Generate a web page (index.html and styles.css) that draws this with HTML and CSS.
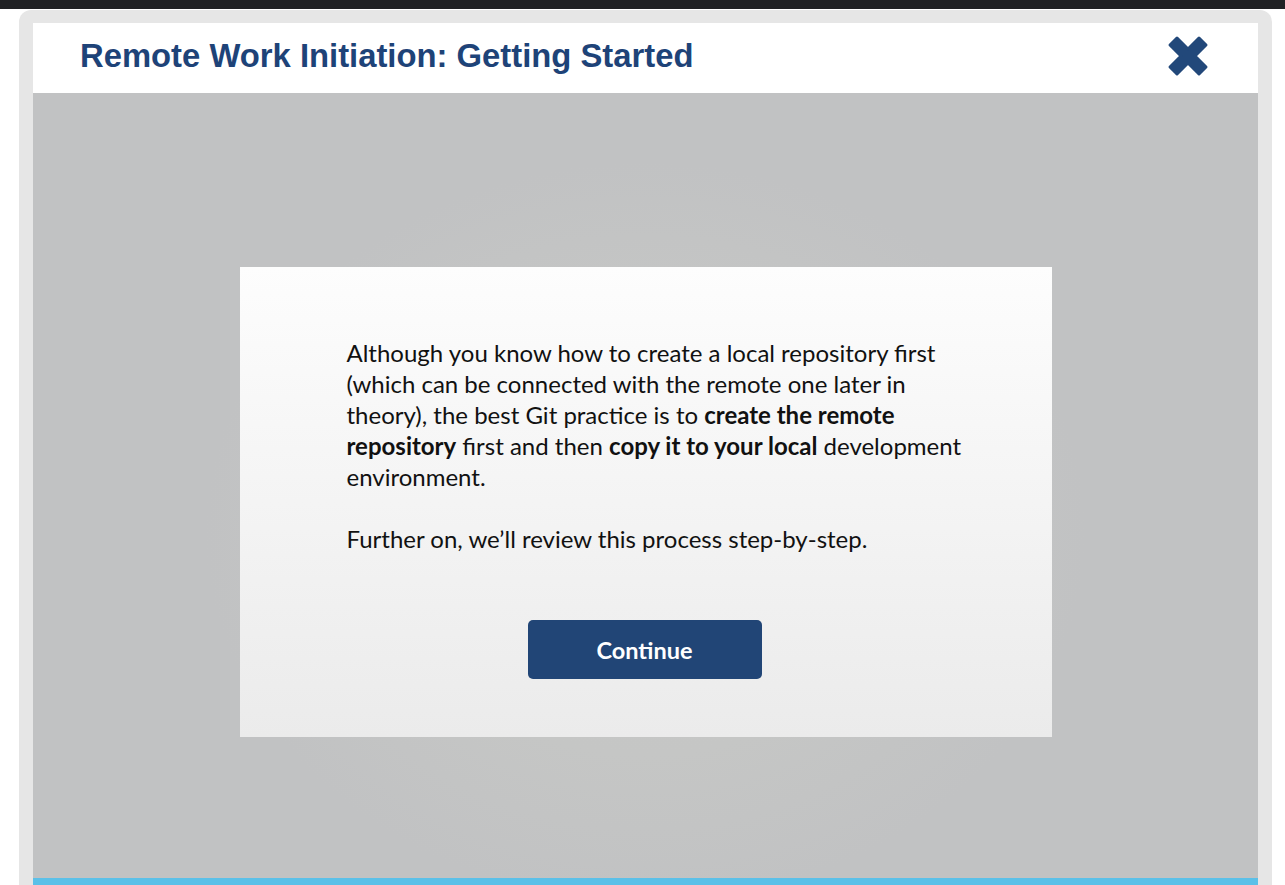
FILE: index.html
```html
<!DOCTYPE html>
<html>
<head>
<meta charset="utf-8">
<link rel="stylesheet" href="styles.css">
</head>
<body>
<div class="topbar"></div>
<div class="frame">
  <div class="window">
    <header class="header">
      <h1 class="title">Remote Work Initiation: Getting Started</h1>
      <svg class="close" width="48" height="48" viewBox="0 0 48 48" aria-label="Close">
        <path d="M6 13 L13 6 L24 17 L35 6 L42 13 L31 24 L42 35 L35 42 L24 31 L13 42 L6 35 L17 24 Z" fill="#22487a" stroke="#22487a" stroke-width="3" stroke-linejoin="round"/>
      </svg>
    </header>
    <main class="stage">
      <div class="card">
        <div class="copy">
          <p>Although you know how to create a local repository first (which can be connected with the remote one later in theory), the best Git practice is to <b>create the remote repository</b> first and then <b>copy it to your local</b> development environment.</p>
          <p>Further on, we’ll review this process step-by-step.</p>
        </div>
        <button class="continue">Continue</button>
      </div>
    </main>
    <div class="stripe"></div>
  </div>
</div>
</body>
</html>
```

FILE: styles.css
```css
html, body {
  margin: 0;
  padding: 0;
  background: #ffffff;
  height: 885px;
  overflow: hidden;
}
.topbar {
  height: 9px;
  background: #202124;
}
.frame {
  margin: 1px 13px 0 19px;
  background: #e6e6e6;
  border-radius: 12px 12px 0 0;
  padding: 13px 14px 0 14px;
  box-sizing: border-box;
}
.window {
  display: flex;
  flex-direction: column;
  height: 862px;
}
.header {
  height: 70px;
  background: #ffffff;
  display: flex;
  align-items: center;
  justify-content: space-between;
  padding: 0 46px 0 47px;
  flex: none;
}
.title {
  margin: 0;
  font-family: "Liberation Sans", Arial, sans-serif;
  font-weight: bold;
  font-size: 32.8px;
  color: #1e4378;
  margin-top: -4px;
}
.close {
  display: block;
  margin-top: -4px;
}
.stage {
  height: 785px;
  flex: none;
  background: radial-gradient(ellipse 440px 370px at 50% 56%, #c8c9c7 0%, #c5c6c5 60%, #c1c2c3 100%);
  display: flex;
  justify-content: center;
  align-items: flex-start;
  padding-top: 174px;
  box-sizing: border-box;
}
.card {
  width: 812px;
  height: 470px;
  background: linear-gradient(#fdfdfd, #ebebeb);
  box-sizing: border-box;
  padding: 70px 0 0 107px;
  display: flex;
  flex-direction: column;
}
.copy {
  width: 628px;
  font-family: "Lato", "Open Sans", sans-serif;
  font-size: 24px;
  line-height: 31px;
  color: #111111;
}
.copy p {
  margin: 0 0 31px 0;
}
.copy b {
  font-weight: bold;
}
.continue {
  align-self: flex-start;
  margin: 35px 0 0 181px;
  width: 234px;
  height: 59px;
  background: #214576;
  border: none;
  border-radius: 5px;
  color: #ffffff;
  font-family: "Lato", "Open Sans", sans-serif;
  font-weight: bold;
  font-size: 23.5px;
  padding: 0;
}
.stripe {
  height: 7px;
  background: #5bc0e8;
  flex: none;
}
```
